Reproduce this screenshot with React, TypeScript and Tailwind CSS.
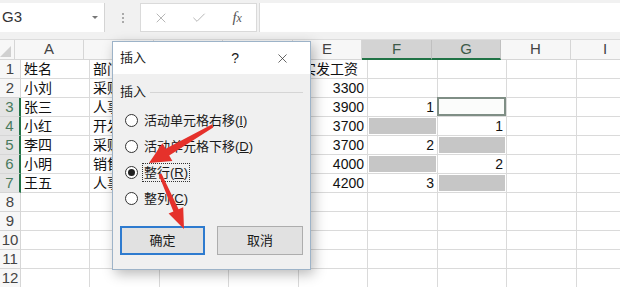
import { X, Check } from "lucide-react";

const cols = [
  { k: "A", w: "w-[69px]" },
  { k: "B", w: "w-[70px]" },
  { k: "C", w: "w-[69px]" },
  { k: "D", w: "w-[70px]" },
  { k: "E", w: "w-[69px]" },
  { k: "F", w: "w-[70px]", sel: true },
  { k: "G", w: "w-[69px]", sel: true },
  { k: "H", w: "w-[70px]" },
  { k: "I", w: "w-[69px]" },
];

type Cell = { t?: string; right?: boolean; fill?: boolean; active?: boolean };

const rows: Cell[][] = [
  [{ t: "姓名" }, { t: "部门" }, {}, {}, { t: "实发工资" }, {}, {}],
  [{ t: "小刘" }, { t: "采购部" }, {}, {}, { t: "3300", right: true }, {}, {}],
  [{ t: "张三" }, { t: "人事部" }, {}, {}, { t: "3900", right: true }, { t: "1", right: true }, { active: true }],
  [{ t: "小红" }, { t: "开发部" }, {}, {}, { t: "3700", right: true }, { fill: true }, { t: "1", right: true }],
  [{ t: "李四" }, { t: "采购部" }, {}, {}, { t: "3700", right: true }, { t: "2", right: true }, { fill: true }],
  [{ t: "小明" }, { t: "销售部" }, {}, {}, { t: "4000", right: true }, { fill: true }, { t: "2", right: true }],
  [{ t: "王五" }, { t: "人事部" }, {}, {}, { t: "4200", right: true }, { t: "3", right: true }, { fill: true }],
  [], [], [], [], [],
];

const options = [
  { label: "活动单元格右移", key: "I" },
  { label: "活动单元格下移", key: "D" },
  { label: "整行", key: "R", checked: true },
  { label: "整列", key: "C" },
];

function FormulaBar() {
  return (
    <div className="h-[40px] bg-[#f1f1f1] flex items-start pt-[3px] pb-[8px] border-b border-[#dcdcdc]">
      <div className="w-[105px] h-[29px] bg-white border-r border-[#d4d4d4] flex items-center pl-[2px] pr-[6px]">
        <span className="text-[15px] text-[#333]">G3</span>
        <span className="ml-auto w-0 h-0 border-l-[3px] border-r-[3px] border-t-[3px] border-l-transparent border-r-transparent border-t-[#777]" />
      </div>
      <div className="w-[35px] h-[29px] flex flex-col items-center justify-center gap-[2px]">
        <span className="w-[2px] h-[2px] bg-[#aaa]" />
        <span className="w-[2px] h-[2px] bg-[#aaa]" />
        <span className="w-[2px] h-[2px] bg-[#aaa]" />
      </div>
      <div className="w-[117px] h-[29px] bg-white border border-[#dadada] flex items-center">
        <div className="w-[38px] flex justify-center pl-[3px]">
          <X size={16} strokeWidth={1.2} color="#a3a3a3" />
        </div>
        <div className="w-[40px] flex justify-center">
          <Check size={16} strokeWidth={1.2} color="#a3a3a3" />
        </div>
        <div className="w-[38px] flex justify-center italic text-[15px] text-[#555] font-['Liberation_Serif',serif]">
          f<span className="text-[12px] mt-[3px]">x</span>
        </div>
      </div>
      <div className="flex-1 h-[29px] bg-white ml-[2px] border-l border-[#dadada]" />
    </div>
  );
}

function Sheet() {
  return (
    <div className="flex flex-col">
      <div className="flex h-[20px]">
        <div className="w-[21px] h-full bg-[#f7f7f7] border-r border-b border-[#d6d6d6] flex items-end justify-end pr-[3px] pb-[2px]">
          <span className="w-0 h-0 border-b-[11px] border-l-[11px] border-b-[#d0d0d0] border-l-transparent" />
        </div>
        {cols.map((c) => (
          <div
            key={c.k}
            className={`${c.w} shrink-0 h-full flex items-center justify-center text-[15px] border-r ${
              c.sel
                ? "bg-[#d3d3d3] text-[#3c5a48] border-r-[#c0c0c0] border-b-2 border-b-[#217346]"
                : "bg-[#f7f7f7] text-[#444] border-r-[#d6d6d6] border-b border-b-[#d6d6d6]"
            }`}
          >
            {c.k}
          </div>
        ))}
      </div>
      {rows.map((r, i) => {
        const selRow = i >= 2 && i <= 6;
        return (
          <div key={i} className="flex h-[19px]">
            <div
              className={`w-[21px] shrink-0 h-full flex items-center justify-center text-[15px] border-b border-b-[#d6d6d6] ${
                selRow
                  ? "bg-[#e4e4e4] text-[#4a7a5e] border-r-2 border-r-[#217346]"
                  : "bg-[#f7f7f7] text-[#444] border-r border-r-[#d6d6d6]"
              }`}
            >
              {i + 1}
            </div>
            {cols.map((c, j) => {
              const cell = r[j] || {};
              return (
                <div
                  key={c.k}
                  className={`${c.w} shrink-0 h-full border-r border-b border-[#dadada] text-[14px] text-[#111] leading-[18px] whitespace-nowrap overflow-visible relative ${
                    cell.right ? "text-right pr-[3px]" : "pl-[3px]"
                  }`}
                >
                  {cell.fill && <div className="absolute inset-[1px] bg-[#c6c6c6]" />}
                  {cell.active && (
                    <div className="absolute -left-[1px] -top-[1px] right-[0px] bottom-[0px] border-2 border-[#7f8e85] bg-[#fbfcfb]" />
                  )}
                  {cell.t}
                </div>
              );
            })}
          </div>
        );
      })}
    </div>
  );
}

function Radio({ label, k, checked }: { label: string; k: string; checked?: boolean }) {
  return (
    <div className="flex items-center h-[26px] pl-[12px]">
      <span className="w-[13px] h-[13px] rounded-full border border-[#333] bg-white flex items-center justify-center">
        {checked && <span className="w-[7px] h-[7px] rounded-full bg-[#222]" />}
      </span>
      <span
        className={`ml-[5px] px-[1px] text-[13px] text-[#1a1a1a] leading-[17px] ${
          checked ? "outline outline-1 outline-dotted outline-[#333]" : ""
        }`}
      >
        {label}(<span className="underline">{k}</span>)
      </span>
    </div>
  );
}

function Dialog() {
  return (
    <div className="absolute left-[112px] top-[41px] w-[199px] h-[229px] bg-[#f0f0f0] border border-[#9db3c8] shadow-[3px_4px_12px_rgba(0,0,0,0.28)] flex flex-col">
      <div className="h-[32px] bg-white flex items-center pl-[7px] pr-[20px] text-[13px] text-[#1a1a1a]">
        <span>插入</span>
        <span className="ml-auto text-[14px] mr-[36px] font-['Liberation_Sans',sans-serif]">?</span>
        <X size={15} strokeWidth={1.2} color="#333" />
      </div>
      <div className="flex flex-col pt-[8px] px-[7px]">
        <div className="flex items-center h-[20px] text-[13px] text-[#1a1a1a]">
          <span>插入</span>
          <span className="flex-1 ml-[4px] h-[1px] bg-[#d5d5d5]" />
        </div>
        <div className="flex flex-col mt-[5px] -ml-[7px]">
          {options.map((o) => (
            <Radio key={o.key} label={o.label} k={o.key} checked={o.checked} />
          ))}
        </div>
        <div className="flex gap-[12px] mt-[15px]">
          <button className="w-[85px] h-[29px] bg-[#e1e1e1] border-2 border-[#2e7bcf] text-[13px] text-[#1a1a1a]">
            确定
          </button>
          <button className="w-[86px] h-[29px] bg-[#e1e1e1] border border-[#adadad] text-[13px] text-[#1a1a1a]">
            取消
          </button>
        </div>
      </div>
    </div>
  );
}

function Arrows() {
  return (
    <svg className="absolute left-0 top-0 pointer-events-none" width="620" height="287" viewBox="0 0 620 287">
      <polygon
        fill="#e5312b"
        points="213.2,127.5 169.2,155.4 172.4,161 149,163 162.4,143.2 165.6,148.8 211.8,124.5"
      />
      <polygon
        fill="#e5312b"
        points="161.4,173.4 178.6,209.3 183.2,207.2 184,229 168.6,213.6 173.4,211.6 158.6,174.6"
      />
    </svg>
  );
}

export default function App() {
  return (
    <div className="w-[620px] h-[287px] relative overflow-hidden bg-white font-['Liberation_Sans','Noto_Sans_CJK_SC',sans-serif]">
      <FormulaBar />
      <Sheet />
      <Dialog />
      <Arrows />
    </div>
  );
}
